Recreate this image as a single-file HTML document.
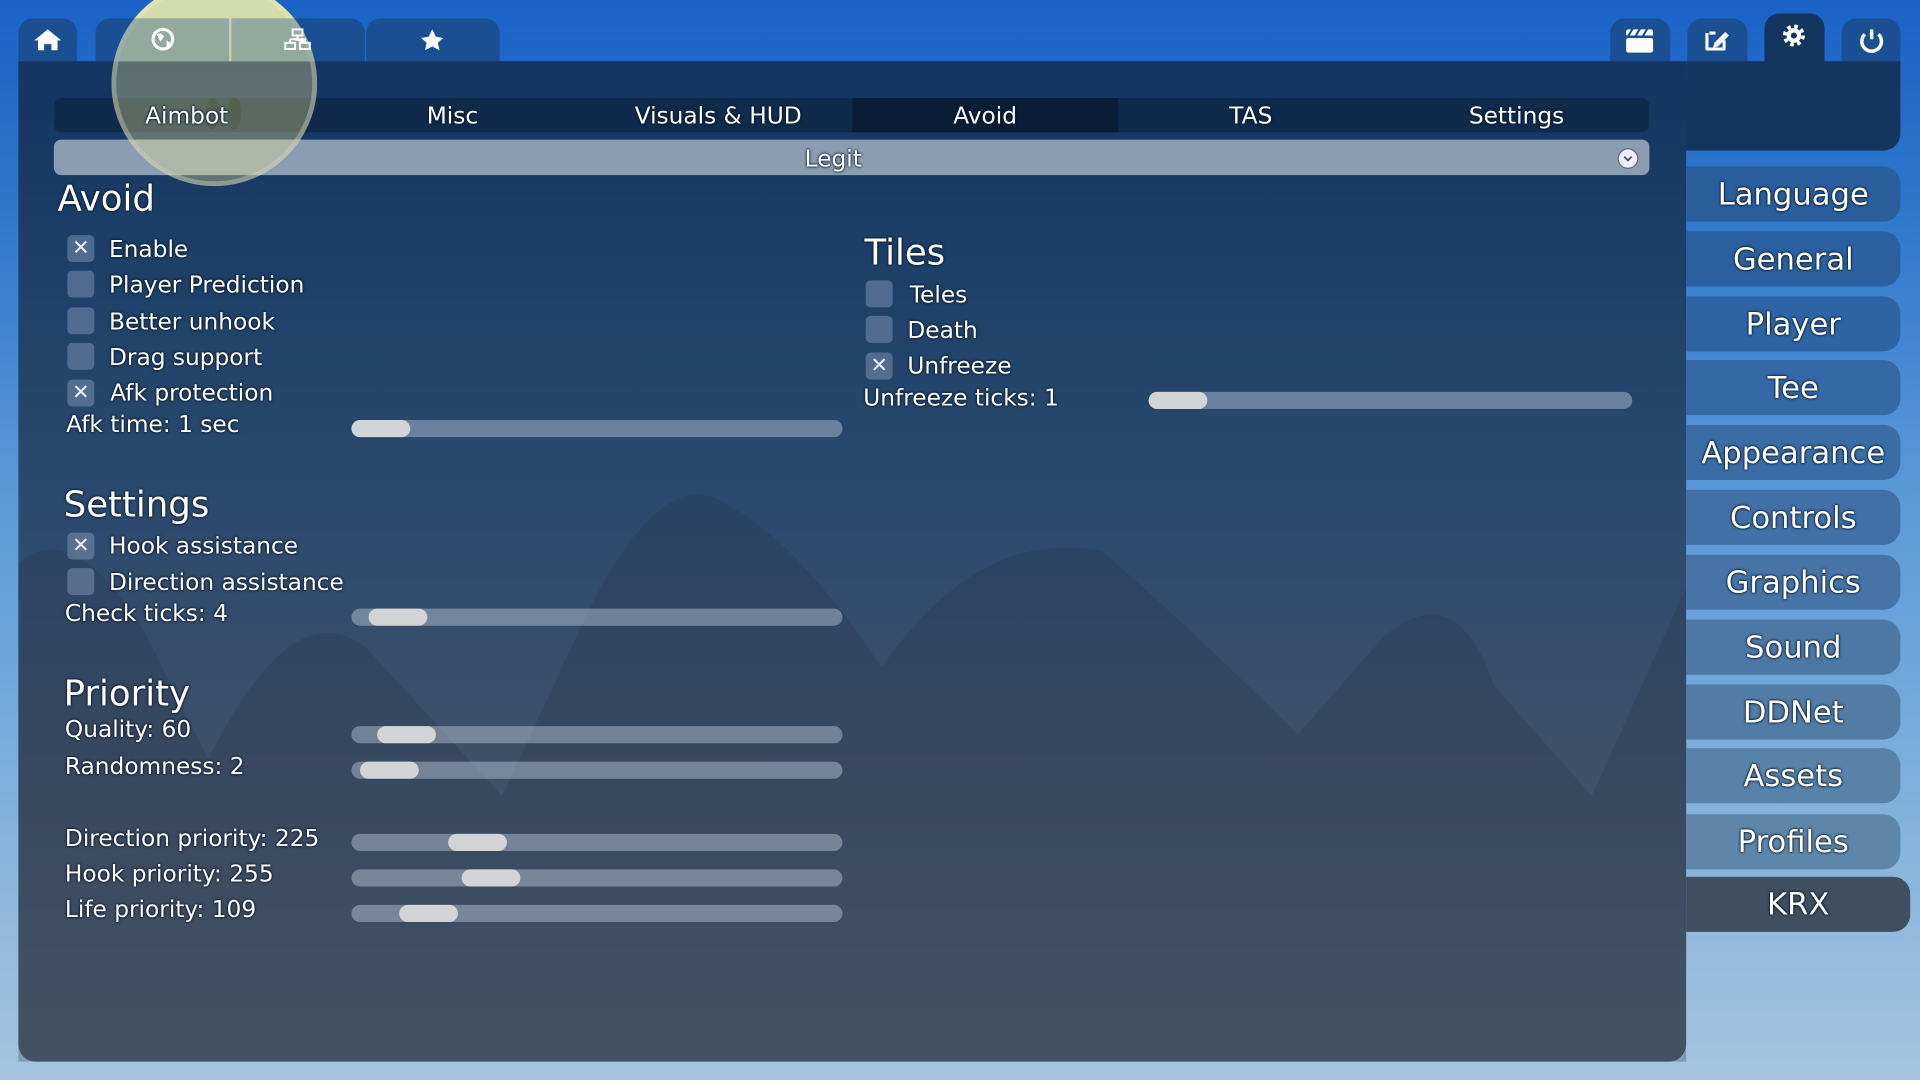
<!DOCTYPE html>
<html><head><meta charset="utf-8"><style>
html,body{margin:0;padding:0;width:1920px;height:1080px;overflow:hidden;background:#6fa0d6}
#w{position:absolute;left:0;top:0;width:1568px;height:882px;transform:scale(1.22449);transform-origin:0 0;overflow:hidden;
background:linear-gradient(180deg,#1a62c6 0%,#2f78cc 20%,#5a98d8 45%,#7aaedc 70%,#a6c4de 100%);font-family:"DejaVu Sans","Liberation Sans",sans-serif;color:#fff}
.t{position:absolute;text-shadow:0 0 2px #0a1a30,0 0 2px #0a1a30;white-space:nowrap}
.tab{position:absolute;background:#1a4f94;border-radius:12px 12px 0 0}
.panel{position:absolute;left:15px;top:50px;width:1362px;height:817px;border-radius:0 0 14px 14px;
background:linear-gradient(180deg,#143461 0%,#1d3f68 20%,#2c4a6e 45%,#3d5068 70%,#4e5f70 100%)}
.hdr{position:absolute;left:1377px;top:50px;width:175px;height:73px;background:#14355f;border-radius:0 0 14px 0}
.cb{position:absolute;left:55px;width:22px;height:22px;background:rgba(140,160,190,.45);border-radius:4px;font-size:17px;line-height:22px;text-align:center;color:#eef}
.tr{position:absolute;height:14px;border-radius:7px;background:rgba(190,205,220,.45)}
.kn{position:absolute;top:0;width:48px;height:14px;border-radius:7px;background:#d2d4d6}
.rb{position:absolute;left:1377px;width:175px;height:45px;border-radius:0 14px 14px 0;font-size:25px;text-align:center;line-height:45px}
.lbl{font-size:19px;margin-top:2px}
.h{font-size:29px;margin-top:2px}
</style></head><body><div id="w">
<div class="tab" style="left:15px;top:15px;width:48px;height:36px"></div>
<div class="tab" style="left:78px;top:15px;width:109px;height:36px"></div>
<div class="tab" style="left:189px;top:15px;width:109px;height:36px"></div>
<div class="tab" style="left:299px;top:15px;width:109px;height:36px"></div>
<div class="tab" style="left:1315px;top:15px;width:49px;height:36px"></div>
<div class="tab" style="left:1378px;top:15px;width:49px;height:36px"></div>
<div class="tab" style="left:1441px;top:11px;width:49px;height:40px;background:#12345f"></div>
<div class="tab" style="left:1504px;top:15px;width:48px;height:36px"></div>
<div class="panel"></div>
<div class="hdr"></div>
<svg style="position:absolute;left:0;top:0" width="1568" height="882">
<path d="M15 460 Q60 420 120 520 L170 620 Q240 480 300 530 L410 650 L480 500 Q540 380 590 410 Q650 440 720 545 Q800 430 900 450 Q980 520 1060 600 L1130 520 Q1190 470 1220 560 L1300 650 L1377 480 L1377 867 L15 867Z" fill="rgba(40,55,75,.28)"/>
</svg>
<div style="position:absolute;left:44px;top:80px;width:1303px;height:28px;background:#0f2a4b;border-radius:6px"></div>
<div style="position:absolute;left:696px;top:80px;width:217px;height:28px;background:#0a1d37"></div>
<div style="position:absolute;left:44px;top:114px;width:1303px;height:29px;background:#8a9db2;border-radius:6px"></div>
<!-- sun -->
<div style="position:absolute;left:91px;top:-16px;width:168px;height:168px;border-radius:50%;background:rgba(250,240,150,.32);box-shadow:inset 0 0 0 4px rgba(210,210,190,.4)"></div>
<div style="position:absolute;left:91px;top:-16px;width:168px;height:66px;overflow:hidden"><div style="width:168px;height:168px;border-radius:50%;background:rgba(250,245,170,.75)"></div></div>
<div style="position:absolute;left:91px;top:15px;width:168px;height:35px;background:rgba(26,79,148,.35)"></div>
<div style="position:absolute;left:187px;top:15px;width:2px;height:35px;background:rgba(250,245,170,.5)"></div>
<div style="position:absolute;left:168px;top:80px;width:11px;height:26px;border-radius:50%;background:rgba(80,80,40,.3)"></div>
<div style="position:absolute;left:186px;top:79px;width:11px;height:27px;border-radius:50%;background:rgba(80,80,40,.3)"></div>
<svg style="position:absolute;left:0;top:0" width="1568" height="60">
<g fill="#fff">
<path d="M39 24 L28 33 H31 V41 H36 V36 H42 V41 H47 V33 H50Z"/>
<circle cx="133" cy="32" r="8" fill="none" stroke="#fff" stroke-width="2.5"/><path d="M128 28 Q132 26 134 30 L131 34Z M136 33 L139 35 L136 39Z"/>
<rect x="239" y="24" width="8" height="5" fill="none" stroke="#fff" stroke-width="1.6"/><rect x="233" y="35" width="8" height="5" fill="none" stroke="#fff" stroke-width="1.6"/><rect x="245" y="35" width="8" height="5" fill="none" stroke="#fff" stroke-width="1.6"/><path d="M243 29 V32 M237 32 H249 V35 M237 32 V35" stroke="#fff" stroke-width="1.6"/>
<path d="M353 24 L356 30 L362 31 L357.5 35 L359 41 L353 38 L347 41 L348.5 35 L344 31 L350 30Z"/>
<rect x="1328" y="31" width="22" height="12" rx="2"/>
<path d="M1328 29 V26 Q1328 24 1330 24 H1332 L1329 29Z M1334 24 H1338 L1335 29 H1331Z M1340 24 H1344 L1341 29 H1337Z M1346 24 H1348 Q1350 24 1350 26 V29 H1343Z"/>
<path d="M1396 27 H1401 M1394 27 V40 H1408 V33" stroke="#fff" stroke-width="2.5" fill="none" stroke-linejoin="round"/><path d="M1400 35 L1409 26 L1412 29 L1403 38 L1399 39Z"/>
<circle cx="1465" cy="29" r="7.5" fill="none" stroke="#fff" stroke-width="3" stroke-dasharray="3 2.9"/>
<circle cx="1465" cy="29" r="6"/><circle cx="1465" cy="29" r="2.5" fill="#12345f"/>
<path d="M1523 28 A8 8 0 1 0 1534 28" stroke="#fff" stroke-width="2.8" fill="none"/><path d="M1528.5 24 V32" stroke="#fff" stroke-width="2.8"/>
</g>
</svg>
<div class="t lbl" style="left:44px;top:82px;width:217px;text-align:center">Aimbot</div>
<div class="t lbl" style="left:261px;top:82px;width:217px;text-align:center">Misc</div>
<div class="t lbl" style="left:478px;top:82px;width:217px;text-align:center">Visuals &amp; HUD</div>
<div class="t lbl" style="left:696px;top:82px;width:217px;text-align:center">Avoid</div>
<div class="t lbl" style="left:913px;top:82px;width:217px;text-align:center">TAS</div>
<div class="t lbl" style="left:1130px;top:82px;width:217px;text-align:center">Settings</div>
<div class="t lbl" style="left:44px;top:117px;width:1273px;text-align:center">Legit</div>
<div style="position:absolute;left:1322px;top:122px;width:15px;height:15px;border-radius:50%;background:#eef;box-shadow:0 0 0 1px #667"></div>
<svg style="position:absolute;left:1322px;top:122px" width="15" height="15"><path d="M4.5 6 L7.5 9 L10.5 6" stroke="#556" stroke-width="1.6" fill="none"/></svg>

<div class="t h" style="left:47px;top:143px">Avoid</div>
<div class="cb" style="top:192px">✕</div><div class="t lbl" style="left:89px;top:191px">Enable</div>
<div class="cb" style="top:221px"></div><div class="t lbl" style="left:89px;top:220px">Player Prediction</div>
<div class="cb" style="top:251px"></div><div class="t lbl" style="left:89px;top:250px">Better unhook</div>
<div class="cb" style="top:280px"></div><div class="t lbl" style="left:89px;top:279px">Drag support</div>
<div class="cb" style="top:310px">✕</div><div class="t lbl" style="left:90px;top:308px">Afk protection</div>
<div class="t lbl" style="left:54px;top:334px">Afk time: 1 sec</div>
<div class="tr" style="left:287px;top:343px;width:401px"><div class="kn" style="left:0"></div></div>

<div class="t h" style="left:52px;top:393px">Settings</div>
<div class="cb" style="top:435px">✕</div><div class="t lbl" style="left:89px;top:433px">Hook assistance</div>
<div class="cb" style="top:464px"></div><div class="t lbl" style="left:89px;top:463px">Direction assistance</div>
<div class="t lbl" style="left:53px;top:488px">Check ticks: 4</div>
<div class="tr" style="left:287px;top:497px;width:401px"><div class="kn" style="left:14px"></div></div>

<div class="t h" style="left:52px;top:547px">Priority</div>
<div class="t lbl" style="left:53px;top:583px">Quality: 60</div>
<div class="tr" style="left:287px;top:593px;width:401px"><div class="kn" style="left:21px"></div></div>
<div class="t lbl" style="left:53px;top:613px">Randomness: 2</div>
<div class="tr" style="left:287px;top:622px;width:401px"><div class="kn" style="left:7px"></div></div>
<div class="t lbl" style="left:53px;top:672px">Direction priority: 225</div>
<div class="tr" style="left:287px;top:681px;width:401px"><div class="kn" style="left:79px"></div></div>
<div class="t lbl" style="left:53px;top:701px">Hook priority: 255</div>
<div class="tr" style="left:287px;top:710px;width:401px"><div class="kn" style="left:90px"></div></div>
<div class="t lbl" style="left:53px;top:730px">Life priority: 109</div>
<div class="tr" style="left:287px;top:739px;width:401px"><div class="kn" style="left:39px"></div></div>

<div class="t h" style="left:706px;top:187px">Tiles</div>
<div class="cb" style="left:707px;top:229px"></div><div class="t lbl" style="left:743px;top:228px">Teles</div>
<div class="cb" style="left:707px;top:258px"></div><div class="t lbl" style="left:741px;top:257px">Death</div>
<div class="cb" style="left:707px;top:288px">✕</div><div class="t lbl" style="left:741px;top:286px">Unfreeze</div>
<div class="t lbl" style="left:705px;top:312px">Unfreeze ticks: 1</div>
<div class="tr" style="left:938px;top:320px;width:395px"><div class="kn" style="left:0"></div></div>

<div class="rb t" style="top:136px;background:#2a5e9c">Language</div>
<div class="rb t" style="top:189px;background:#2b60a0">General</div>
<div class="rb t" style="top:242px;background:#2e64a4">Player</div>
<div class="rb t" style="top:294px;background:#3468a6">Tee</div>
<div class="rb t" style="top:347px;background:#3a6ca6">Appearance</div>
<div class="rb t" style="top:400px;background:#4070a6">Controls</div>
<div class="rb t" style="top:453px;background:#4674a6">Graphics</div>
<div class="rb t" style="top:506px;background:#4c78a6">Sound</div>
<div class="rb t" style="top:559px;background:#527ca6">DDNet</div>
<div class="rb t" style="top:611px;background:#5882a8">Assets</div>
<div class="rb t" style="top:665px;background:#5e86aa">Profiles</div>
<div class="rb t" style="top:716px;width:183px;background:#3e4f62">KRX</div>
</div></body></html>
